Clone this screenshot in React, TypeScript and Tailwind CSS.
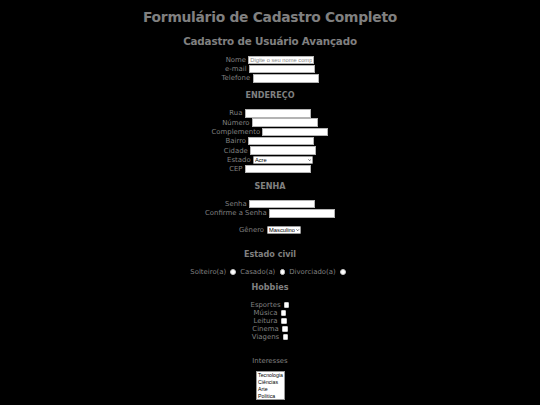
import React from "react";

const ESTADOS = ["Acre", "Alagoas", "Amapá", "Amazonas", "Bahia", "Ceará", "Distrito Federal", "São Paulo"];

function Field({ label, placeholder }: { label: string; placeholder?: string }) {
  return (
    <div className="flex h-[9.3px] items-center justify-center">
      <label>{label}</label>
      <input
        type="text"
        placeholder={placeholder}
        className="ml-[2.3px] h-[8.4px] w-[66px] border border-[#b4b4b4] bg-white px-[1px] font-['Liberation_Sans',Arial,sans-serif] text-[5.76px] text-black outline-none placeholder:text-[#8a8a8a]"
      />
    </div>
  );
}

function Chevron() {
  return (
    <svg
      viewBox="0 0 8 5"
      className="pointer-events-none absolute right-[1.5px] top-1/2 h-[2.2px] w-[3.4px] -translate-y-1/2"
    >
      <path d="M1 1 L4 4 L7 1" fill="none" stroke="#222" strokeWidth="1.6" />
    </svg>
  );
}

function Dropdown({ width, options }: { width: string; options: string[] }) {
  return (
    <span className={`relative inline-flex h-[8px] ${width}`}>
      <select className="h-full w-full appearance-none rounded-[1px] border border-[#9a9a9a] bg-white pl-[1px] pr-[5px] font-['Liberation_Sans',Arial,sans-serif] text-[5.76px] leading-[6px] text-black outline-none">
        {options.map((o) => (
          <option key={o}>{o}</option>
        ))}
      </select>
      <Chevron />
    </span>
  );
}

function Section({ title, className }: { title: string; className: string }) {
  return <h3 className={`${className} text-[8.09px] font-bold leading-[9.41px]`}>{title}</h3>;
}

function Radio({ label, name }: { label: string; name: string }) {
  return (
    <>
      <span>{label}</span>
      <input
        type="radio"
        name={name}
        className="ml-[4.2px] mr-[4.2px] h-[5.6px] w-[5.6px] appearance-none rounded-full border-[0.5px] border-[#c8c8c8] bg-white"
      />
    </>
  );
}

function Hobby({ label }: { label: string }) {
  return (
    <div className="flex h-[8.04px] items-center justify-center">
      <span>{label}</span>
      <input
        type="checkbox"
        className="ml-[3.4px] h-[5.6px] w-[5.6px] appearance-none rounded-[1px] border-[0.5px] border-[#c8c8c8] bg-white"
      />
    </div>
  );
}

export default function App() {
  return (
    <div className="flex min-h-[405px] w-full flex-col overflow-hidden bg-black pt-[9.26px] text-center font-['DejaVu_Sans',sans-serif] text-[6.91px] leading-[8.04px] text-[#808080]">
      <h1 className="text-[13.82px] font-bold leading-[16.1px] tracking-[-0.26px]">Formulário de Cadastro Completo</h1>
      <h2 className="mt-[9.26px] text-[10.37px] font-bold leading-[12.07px] tracking-[-0.18px]">
        Cadastro de Usuário Avançado
      </h2>

      <form className="flex flex-col">
        <div className="mt-[8.6px] flex flex-col">
          <Field label="Nome" placeholder="Digite o seu nome completo" />
          <Field label="e-mail" />
          <Field label="Telefone" />
        </div>

        <Section title="ENDEREÇO" className="mt-[8.1px]" />
        <div className="mt-[8.1px] flex flex-col">
          <Field label="Rua" />
          <Field label="Número" />
          <Field label="Complemento" />
          <Field label="Bairro" />
          <Field label="Cidade" />
          <div className="flex h-[9.3px] items-center justify-center">
            <label>Estado</label>
            <span className="ml-[2.3px] inline-flex">
              <Dropdown width="w-[60px]" options={ESTADOS} />
            </span>
          </div>
          <Field label="CEP" />
        </div>

        <Section title="SENHA" className="mt-[8.1px]" />
        <div className="mt-[8.1px] flex flex-col">
          <Field label="Senha" />
          <Field label="Confirme a Senha" />
        </div>

        <div className="mt-[7.3px] flex h-[9.3px] items-center justify-center">
          <label>Gênero</label>
          <span className="ml-[3px] inline-flex">
            <Dropdown width="w-[34px]" options={["Masculino", "Feminino", "Outro"]} />
          </span>
        </div>

        <Section title="Estado civil" className="mt-[15.5px]" />
        <div className="mt-[8.1px] flex h-[8.6px] items-center justify-center">
          <Radio label="Solteiro(a)" name="civil" />
          <Radio label="Casado(a)" name="civil" />
          <Radio label="Divorciado(a)" name="civil" />
        </div>

        <Section title="Hobbies" className="mt-[7.2px]" />
        <div className="mt-[8.1px] flex flex-col">
          <Hobby label="Esportes" />
          <Hobby label="Música" />
          <Hobby label="Leitura" />
          <Hobby label="Cinema" />
          <Hobby label="Viagens" />
        </div>

        <div className="mt-[15.7px] h-[8.04px]">Interesses</div>
        <div className="mt-[5.8px] flex justify-center">
          <div
            role="listbox"
            className="flex h-[29.3px] w-[29px] flex-col overflow-hidden border-[0.5px] border-[#9a9a9a] bg-white pt-[0.6px] text-left font-['Liberation_Sans',Arial,sans-serif] text-[5.2px] leading-[7.05px] text-black"
          >
            {["Tecnologia", "Ciências", "Arte", "Política"].map((o) => (
              <div key={o} role="option" className="whitespace-nowrap pl-[1.6px]">
                {o}
              </div>
            ))}
          </div>
        </div>
      </form>
    </div>
  );
}
